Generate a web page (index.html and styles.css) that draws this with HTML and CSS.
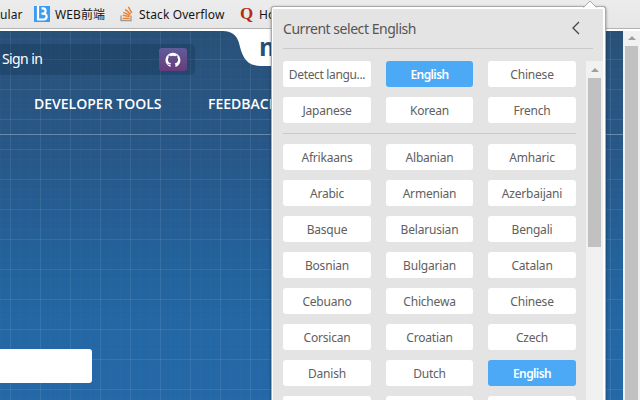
FILE: index.html
```html
<!DOCTYPE html>
<html lang="en">
<head>
<meta charset="utf-8">
<title>Language selection</title>
<link rel="stylesheet" href="styles.css">
</head>
<body>
<div class="browser">
  <nav class="bookmarks">
    <span class="bm bm-first">ular</span>
    <span class="bm bm-web"><svg width="16" height="16" viewBox="0 0 16 16"><path fill="#3c9cf2" d="M0 0h16v16H0z"/><path fill="none" stroke="#fff" stroke-width="2.200" d="M4 0v13.500h5.500c4.200 0 4.200-5.800 0-5.800H7.500M7.500 2.300h1.800c3 0 3 5.200 0 5.400"/></svg><b class="bm-text">WEB前端</b></span>
    <span class="bm bm-stack"><svg width="14" height="16" viewBox="0 0 14 16"><path fill="none" stroke="#9a9a9a" stroke-width="1.3" d="M1 9.500v5h10v-5"/><path fill="none" stroke="#ef7f26" stroke-width="1.4" d="M2.700 12.400h6.800M2.800 9.300l6.800 1.300M3.400 6.300l6.400 3M5.100 3.400l5.500 4.700M8.300.9l3.600 6"/></svg><b class="bm-text">Stack Overflow</b></span>
    <span class="bm bm-quora"><i class="q">Q</i><b class="bm-text">Home</b></span>
  </nav>
  <div class="viewport">
    <main class="page">
      <header class="top">
        <div class="account"><span class="signin">Sign in</span><span class="github"><svg width="16" height="16" viewBox="0 0 16 16"><path fill="#fff" d="M8 .7a7.400 7.400 0 0 0-2.500 14.400v-2.200c-2 .4-2.700-.6-3-1.500.8-.1 1 .8 1.500 1 .6.3 1.200.2 1.600-.1.1-.5.300-.8.600-1-2-.3-3.300-1.300-3.300-3.800 0-.9.300-1.600.8-2.100-.2-.5-.2-1.300.1-2 .8 0 1.500.4 2.100.8a7 7 0 0 1 4.200 0c.6-.4 1.300-.8 2.100-.8.3.7.3 1.500.1 2 .5.5.8 1.200.8 2.100 0 2.500-1.300 3.500-3.300 3.800.4.4.6.9.6 1.600v2.200A7.400 7.400 0 0 0 8 .7z"/></svg></span></div>
        <div class="brand"><svg width="50" height="36" viewBox="0 0 50 36"><path fill="#fff" d="M0 0c8 0 14 4 16 12 3 12 6 23 22 23h12V0z"/></svg><span class="brand-text">m</span></div>
      </header>
      <nav class="menu"><span class="menu-dev">DEVELOPER TOOLS</span><span class="menu-feed">FEEDBACK</span></nav>
      <div class="search"></div>
    </main>
    <aside class="scroll page-scroll"><i class="arrow"></i><i class="thumb"></i></aside>
  </div>
</div>

<section class="popup">
  <svg class="tip" width="16" height="9" viewBox="0 0 16 9"><path fill="#fff" stroke="#aaa" d="M1.500 7.500 8 1l6.500 6.500"/><path fill="#fff" d="M2 7.500h12V9H2z"/></svg>
  <div class="panel">
    <header class="heading"><span class="title">Current select English</span><svg width="8" height="14" viewBox="0 0 8 14"><path fill="none" stroke="#444" stroke-width="1.300" d="M7 1 1 7l6 6"/></svg></header>
    <div class="body">
      <div class="lists">
        <div class="grid recent"><span class="lang detect">Detect langu...</span><span class="lang on">English</span><span class="lang">Chinese</span><span class="lang">Japanese</span><span class="lang">Korean</span><span class="lang">French</span></div>
        <div class="grid all">
          <span class="lang">Afrikaans</span><span class="lang">Albanian</span><span class="lang">Amharic</span>
          <span class="lang">Arabic</span><span class="lang">Armenian</span><span class="lang">Azerbaijani</span>
          <span class="lang">Basque</span><span class="lang">Belarusian</span><span class="lang">Bengali</span>
          <span class="lang">Bosnian</span><span class="lang">Bulgarian</span><span class="lang">Catalan</span>
          <span class="lang">Cebuano</span><span class="lang">Chichewa</span><span class="lang">Chinese</span>
          <span class="lang">Corsican</span><span class="lang">Croatian</span><span class="lang">Czech</span>
          <span class="lang">Danish</span><span class="lang">Dutch</span><span class="lang on">English</span>
          <span class="lang"></span><span class="lang"></span><span class="lang"></span>
        </div>
      </div>
      <aside class="scroll list-scroll"><i class="arrow"></i><i class="thumb"></i></aside>
    </div>
  </div>
</section>
</body>
</html>
```
FILE: styles.css
```css
* { box-sizing: border-box; }
body { margin: 0; width: 640px; height: 400px; overflow: hidden; position: relative; font-family: "Noto Sans", "Noto Sans CJK SC", sans-serif; }
.browser { height: 400px; display: flex; flex-direction: column; }
.bookmarks { height: 31px; flex: none; display: flex; background: linear-gradient(#ececec, #e6e6e6); border-bottom: 2px solid #fff; box-shadow: inset 0 -1px #b3b3b3; font-size: 12px; color: #151515; overflow: hidden; }
.bm { display: flex; align-items: center; height: 28px; flex: none; white-space: nowrap; letter-spacing: .12px; }
.bm-text { font-weight: 400; }
.bm-first { width: 34px; padding-top: 1px; }
.bm-web { width: 86px; gap: 5px; }
.bm-web .bm-text { letter-spacing: .1px; }
.bm-stack { width: 120px; gap: 5px; }
.bm-quora { gap: 6px; }
.q { font: bold 17px/20px "Liberation Serif", serif; color: #b52b12; width: 13px; }
.viewport { flex: 1; display: flex; }
.page {
  width: 623px; overflow: hidden;
  background:
    repeating-linear-gradient(90deg, transparent 0 10px, rgba(255,255,255,.07) 10px 11px, transparent 11px 30px),
    repeating-linear-gradient(180deg, transparent 0 28px, rgba(255,255,255,.07) 28px 29px, transparent 29px 30px),
    repeating-linear-gradient(90deg, rgba(255,255,255,.015) 0 1px, transparent 1px 10px),
    repeating-linear-gradient(180deg, transparent 0 8px, rgba(255,255,255,.015) 8px 9px, transparent 9px 10px),
    linear-gradient(#295178 0, #27588a 130px, #23629b 230px, #2467a5 300px, #2568a7 100%);
}
.top { height: 49px; display: flex; align-items: flex-start; }
.account { margin-top: 13px; width: 195px; height: 31px; border-radius: 0 5px 5px 0; background: rgba(20,45,75,.3); display: flex; align-items: center; justify-content: space-between; padding: 0 8px 0 2px; }
.signin { color: #fff; font-size: 14px; line-height: 19px; padding-bottom: 2px; letter-spacing: -.6px; }
.github { width: 28px; height: 23px; border-radius: 3px; background: linear-gradient(#5f5c99, #693b7c); display: flex; align-items: center; justify-content: center; }
.brand { margin-left: 28px; display: flex; height: 36px; }
.brand-text { margin-left: -14px; color: #25507b; font: bold 25px/30px "Open Sans", sans-serif; }
.menu { height: 55px; display: flex; align-items: flex-start; padding: 14px 0 0 34px; border-bottom: 1px solid rgba(255,255,255,.3); color: #fff; font: 600 14px/19px "Open Sans", sans-serif; white-space: nowrap; }
.menu-dev { width: 174px; }
.search { margin-top: 214px; width: 92px; height: 34px; border-radius: 0 3px 3px 0; background: #fff; }
.scroll { width: 17px; flex: none; background: #f1f1f1; display: flex; flex-direction: column; align-items: center; }
.arrow { border: 4px solid transparent; border-top: 0; border-bottom: 4px solid #a0a0a0; margin-top: 7px; }
.thumb { width: 13px; background: #c1c1c1; }
.page-scroll .arrow { margin-top: 5px; }
.page-scroll .thumb { flex: 1; margin-top: 6px; }
.popup { position: absolute; left: 271px; top: 6px; width: 335px; height: 394px; border: 1px solid #aaa; border-bottom: 0; border-radius: 3px 3px 0 0; background: #fff; box-shadow: 0 1px 3px rgba(0,0,0,.45); padding: 2px 2px 0 1px; }
.tip { position: absolute; left: 310px; top: -7px; }
.panel { height: 391px; background: #e4e4e4; padding-left: 10px; }
.heading { width: 310px; height: 40px; border-bottom: 1px solid #c9c9c9; display: flex; align-items: center; justify-content: space-between; padding: 0 13px 1px 0; }
.title { font-size: 14px; line-height: 19px; color: #555; letter-spacing: -.46px; padding-top: 1px; }
.body { display: flex; justify-content: space-between; margin-top: 12px; height: 339px; }
.lists { width: 293px; overflow: hidden; }
.grid { display: grid; grid-template-columns: 88px 87px 88px; justify-content: space-between; grid-auto-rows: 26px; row-gap: 10px; }
.recent { height: 73px; border-bottom: 1px solid #c9c9c9; }
.all { padding-top: 10px; }
.lang { background: #fff; border-radius: 3px; text-align: center; font-size: 12px; line-height: 27px; color: #606060; letter-spacing: -.2px; white-space: nowrap; }
.detect { letter-spacing: -.35px; }
.on { background: #4ba9f5; color: #fff; font-weight: 600; letter-spacing: -.6px; }
.list-scroll .thumb { margin-top: 6px; height: 169px; }
```
